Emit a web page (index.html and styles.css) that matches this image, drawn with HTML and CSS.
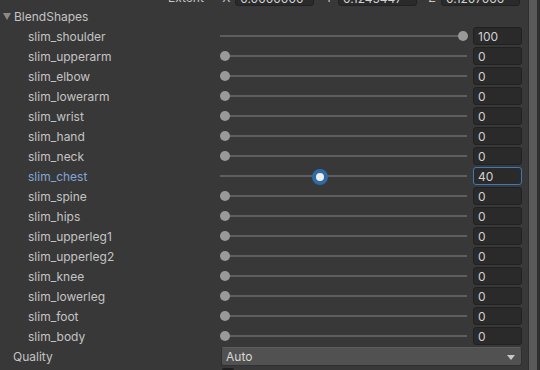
FILE: index.html
```html
<!DOCTYPE html>
<html lang="en">
<head>
    <meta charset="UTF-8">
    <title>BlendShapes</title>
    <link rel="stylesheet" href="styles.css">
</head>
<body>
    <div class="panel">
        <div class="inspector">
            <!-- linha cortada no topo -->
            <div class="extent-row">
                <span class="extent-label">Extent</span>
                <span class="axis">X</span><span class="vec-field">0.0000000</span>
                <span class="axis">Y</span><span class="vec-field">0.1245447</span>
                <span class="axis">Z</span><span class="vec-field">0.1207066</span>
            </div>

            <div class="foldout"><span class="arrow"></span>BlendShapes</div>

            <div class="row"><span class="label">slim_shoulder</span><div class="slider"><div class="range"><span class="thumb" style="left:100%"></span></div></div><span class="num">100</span></div>
            <div class="row"><span class="label">slim_upperarm</span><div class="slider"><div class="range"><span class="thumb" style="left:0%"></span></div></div><span class="num">0</span></div>
            <div class="row"><span class="label">slim_elbow</span><div class="slider"><div class="range"><span class="thumb" style="left:0%"></span></div></div><span class="num">0</span></div>
            <div class="row"><span class="label">slim_lowerarm</span><div class="slider"><div class="range"><span class="thumb" style="left:0%"></span></div></div><span class="num">0</span></div>
            <div class="row"><span class="label">slim_wrist</span><div class="slider"><div class="range"><span class="thumb" style="left:0%"></span></div></div><span class="num">0</span></div>
            <div class="row"><span class="label">slim_hand</span><div class="slider"><div class="range"><span class="thumb" style="left:0%"></span></div></div><span class="num">0</span></div>
            <div class="row"><span class="label">slim_neck</span><div class="slider"><div class="range"><span class="thumb" style="left:0%"></span></div></div><span class="num">0</span></div>
            <div class="row active"><span class="label">slim_chest</span><div class="slider"><div class="range"><span class="thumb" style="left:40%"></span></div></div><span class="num">40</span></div>
            <div class="row"><span class="label">slim_spine</span><div class="slider"><div class="range"><span class="thumb" style="left:0%"></span></div></div><span class="num">0</span></div>
            <div class="row"><span class="label">slim_hips</span><div class="slider"><div class="range"><span class="thumb" style="left:0%"></span></div></div><span class="num">0</span></div>
            <div class="row"><span class="label">slim_upperleg1</span><div class="slider"><div class="range"><span class="thumb" style="left:0%"></span></div></div><span class="num">0</span></div>
            <div class="row"><span class="label">slim_upperleg2</span><div class="slider"><div class="range"><span class="thumb" style="left:0%"></span></div></div><span class="num">0</span></div>
            <div class="row"><span class="label">slim_knee</span><div class="slider"><div class="range"><span class="thumb" style="left:0%"></span></div></div><span class="num">0</span></div>
            <div class="row"><span class="label">slim_lowerleg</span><div class="slider"><div class="range"><span class="thumb" style="left:0%"></span></div></div><span class="num">0</span></div>
            <div class="row"><span class="label">slim_foot</span><div class="slider"><div class="range"><span class="thumb" style="left:0%"></span></div></div><span class="num">0</span></div>
            <div class="row"><span class="label">slim_body</span><div class="slider"><div class="range"><span class="thumb" style="left:0%"></span></div></div><span class="num">0</span></div>

            <div class="quality-row">
                <span class="quality-label">Quality</span>
                <div class="dropdown">Auto<span class="drop-arrow"></span></div>
            </div>
            <div class="next-row"><span class="check"></span></div>
        </div>

        <!-- barra de rolagem -->
        <div class="scrollbar"><div class="scroll-thumb"></div></div>
    </div>
</body>
</html>
```

FILE: styles.css
```css
body {
    margin: 0;
    background: #383838;
    font-family: Inter, "Noto Sans", sans-serif;
    font-size: 12px;
    color: #c4c4c4;
    overflow: hidden;
}

.panel {
    display: flex;
    height: 370px;
}

.inspector {
    flex: 1;
    overflow: hidden;
}

/* linha do Extent, so a parte de baixo aparece */
.extent-row {
    display: flex;
    align-items: center;
    height: 18px;
    margin-top: -12px;
}

.extent-label {
    margin-left: 168px;
    width: 52px;
    color: #c4c4c4;
}

.axis {
    width: 14px;
    text-align: center;
    margin-right: 2px;
}

.vec-field {
    width: 80px;
    height: 17px;
    line-height: 17px;
    box-sizing: border-box;
    padding-left: 4px;
    margin-right: 8px;
    background: #2a2a2a;
    border: 1px solid #212121;
    border-radius: 3px;
    color: #d2d2d2;
}

.foldout {
    display: flex;
    align-items: center;
    height: 20px;
    padding-left: 3px;
}

.arrow {
    width: 0;
    height: 0;
    border-left: 4px solid transparent;
    border-right: 4px solid transparent;
    border-top: 7px solid #8a8a8a;
    margin-right: 3px;
}

.row {
    display: flex;
    align-items: center;
    height: 20px;
}

.label {
    width: 192px;
    padding-left: 28px;
}

.row.active .label {
    color: #81a6d9;
}

.slider {
    position: relative;
    width: 247px;
    height: 20px;
}

.slider::before {
    content: "";
    position: absolute;
    left: 0;
    right: 0;
    top: 9px;
    height: 2px;
    background: #5e5e5e;
}

.range {
    position: absolute;
    left: 5px;
    right: 4px;
    top: 0;
    bottom: 0;
}

.thumb {
    position: absolute;
    top: 5px;
    width: 10px;
    height: 10px;
    margin-left: -5px;
    border-radius: 50%;
    background: #999999;
}

.row.active .thumb {
    top: 3px;
    width: 8px;
    height: 8px;
    margin-left: -8px;
    background: #eeeeee;
    border: 4px solid #2f6aa3;
}

.num {
    width: 49px;
    height: 18px;
    line-height: 17px;
    box-sizing: border-box;
    margin-left: 6px;
    padding-left: 4px;
    background: #2a2a2a;
    border: 1px solid #212121;
    border-radius: 3px;
    color: #d2d2d2;
}

.row.active .num {
    border-color: #3a79bb;
}

.quality-row {
    display: flex;
    align-items: center;
    height: 20px;
}

.quality-label {
    width: 208px;
    padding-left: 13px;
}

.dropdown {
    position: relative;
    width: 301px;
    height: 19px;
    line-height: 18px;
    box-sizing: border-box;
    padding-left: 4px;
    background: #515151;
    border: 1px solid #303030;
    border-top-color: #5d5d5d;
    border-radius: 3px;
    color: #d8d8d8;
}

.drop-arrow {
    position: absolute;
    right: 6px;
    top: 7px;
    border-left: 4px solid transparent;
    border-right: 4px solid transparent;
    border-top: 5px solid #c8c8c8;
}

.next-row {
    height: 20px;
    padding-left: 222px;
}

.check {
    display: block;
    width: 12px;
    height: 12px;
    margin-top: 2px;
    background: #202020;
    border-radius: 2px;
}

.scrollbar {
    width: 12px;
    background: #2e2e2e;
    padding-left: 1px;
    box-sizing: border-box;
}

.scroll-thumb {
    width: 8px;
    height: 100%;
    background: #5a5a5a;
}
```
